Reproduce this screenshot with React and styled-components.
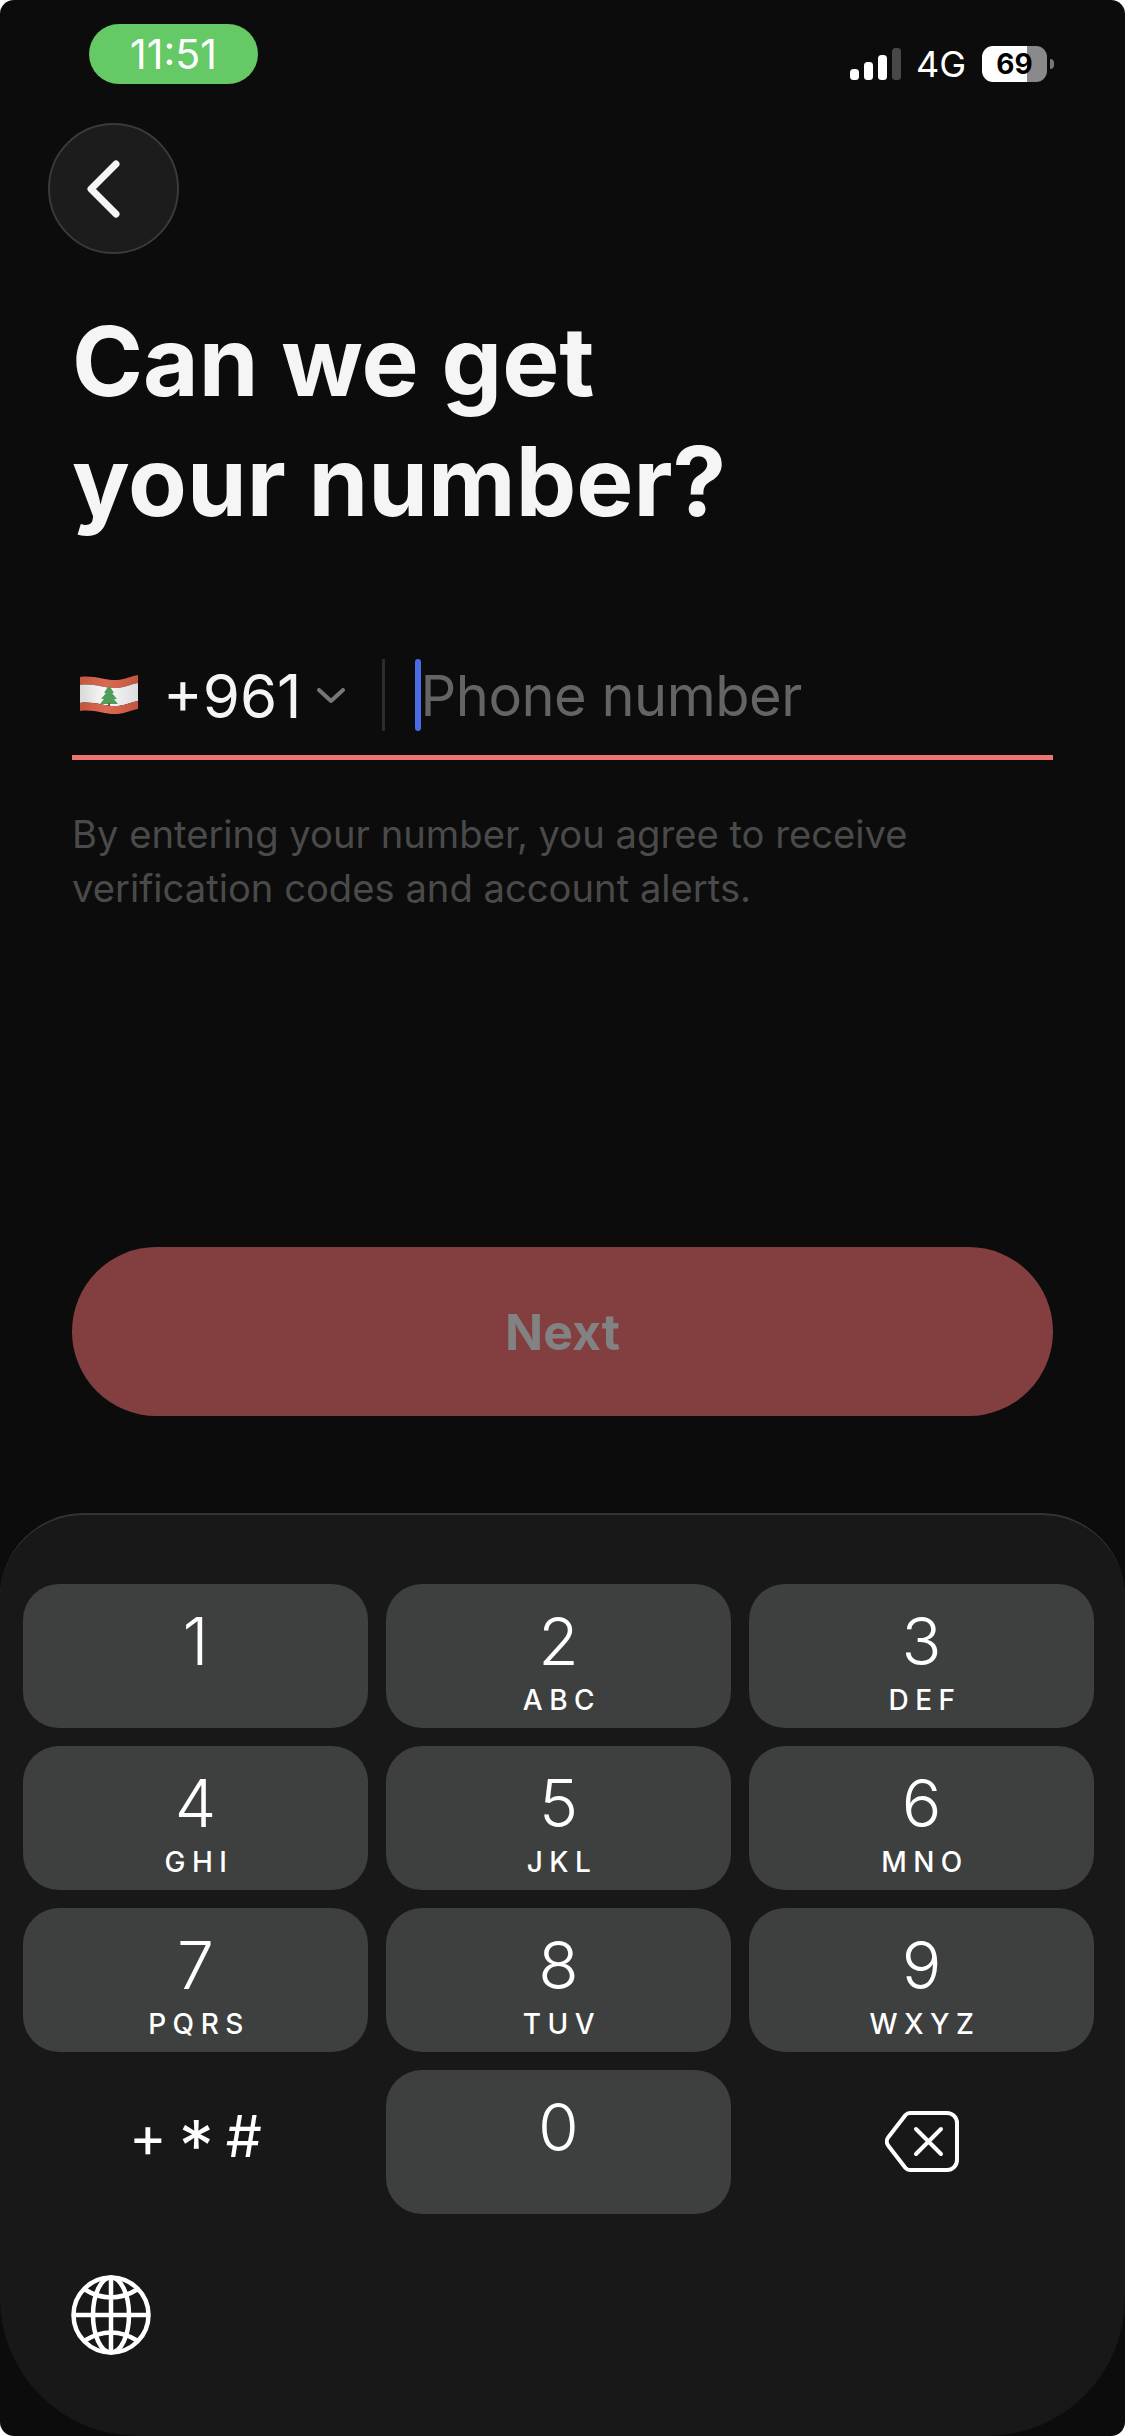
import React from "react";
import styled, { createGlobalStyle } from "styled-components";

const keys = [
  { digit: "1", letters: "" },
  { digit: "2", letters: "ABC" },
  { digit: "3", letters: "DEF" },
  { digit: "4", letters: "GHI" },
  { digit: "5", letters: "JKL" },
  { digit: "6", letters: "MNO" },
  { digit: "7", letters: "PQRS" },
  { digit: "8", letters: "TUV" },
  { digit: "9", letters: "WXYZ" },
];

const wave = (y) =>
  `M0 ${y + 3} C14 ${y + 1} 26 ${y + 7} 38 ${y + 6} C46 ${y + 5} 52 ${y + 2} 58 ${y + 1}`;

const back = (y) =>
  `L58 ${y + 1} C52 ${y + 2} 46 ${y + 5} 38 ${y + 6} C26 ${y + 7} 14 ${y + 1} 0 ${y + 3} Z`;

const band = (top, bottom) => wave(top) + back(bottom);

const Flag = () => (
  <FlagIcon viewBox="0 0 58 42" aria-hidden="true">
    <defs>
      <linearGradient id="flagWhite" x1="0" y1="0" x2="1" y2="0">
        <stop offset="0" stopColor="#d9d9d9" />
        <stop offset="0.45" stopColor="#fafafa" />
        <stop offset="1" stopColor="#dcdcdc" />
      </linearGradient>
      <linearGradient id="flagRed" x1="0" y1="0" x2="1" y2="0">
        <stop offset="0" stopColor="#c4563f" />
        <stop offset="0.45" stopColor="#dc6a52" />
        <stop offset="1" stopColor="#c25540" />
      </linearGradient>
    </defs>
    <path d={band(0, 8)} fill="url(#flagRed)" />
    <path d={band(8, 26)} fill="url(#flagWhite)" />
    <path d={band(26, 34)} fill="url(#flagRed)" />
    <path d="M29 11 L34 19 L32 19 L37 25 L34 25 L38 30 L20 30 L24 25 L21 25 L26 19 L24 19 Z" fill="#4f9e5c" />
    <rect x="28" y="29" width="2" height="3" fill="#7a5a3a" />
  </FlagIcon>
);

const Globe = () => (
  <GlobeIcon viewBox="0 0 80 80" aria-hidden="true">
    <circle cx="40" cy="40" r="37.5" />
    <ellipse cx="40" cy="40" rx="18" ry="37.5" />
    <path d="M40 2.5 V77.5 M2.5 40 H77.5 M13 14 Q40 31 67 14 M13 66 Q40 49 67 66" />
  </GlobeIcon>
);

const App = () => {
  return (
    <Page>
      <GlobalStyle />
      <StatusBar>
        <TimePill>11:51</TimePill>
        <StatusRight>
          <svg width="51" height="32" viewBox="0 0 51 32" aria-hidden="true">
            <rect x="0" y="21" width="9" height="11" rx="3.5" fill="#fff" />
            <rect x="14" y="14" width="9" height="18" rx="3.5" fill="#fff" />
            <rect x="28" y="7" width="9" height="25" rx="3.5" fill="#fff" />
            <rect x="42" y="0" width="9" height="32" rx="3.5" fill="#484848" />
          </svg>
          <Network>4G</Network>
          <Battery>69</Battery>
        </StatusRight>
      </StatusBar>

      <BackButton aria-label="Back">
        <svg width="34" height="58" viewBox="0 0 34 58" aria-hidden="true">
          <path d="M30 4 L5 29 L30 54" />
        </svg>
      </BackButton>

      <Heading>
        Can we get
        <br />
        your number?
      </Heading>

      <PhoneRow>
        <Flag />
        <DialCode>+961</DialCode>
        <svg width="28" height="15" viewBox="0 0 28 15" aria-hidden="true">
          <path d="M2 2 L14 13 L26 2" fill="none" stroke="#777" strokeWidth="4" strokeLinecap="round" strokeLinejoin="round" />
        </svg>
        <Divider />
        <Caret />
        <Placeholder>Phone number</Placeholder>
      </PhoneRow>

      <Legal>
        By entering your number, you agree to receive
        <br />
        verification codes and account alerts.
      </Legal>

      <NextButton>Next</NextButton>

      <Keyboard>
        <KeyGrid>
          {keys.map((k) => (
            <Key key={k.digit}>
              <Digit>{k.digit}</Digit>
              <Letters>{k.letters}</Letters>
            </Key>
          ))}
          <PlainKey $lift={11}>
            <Symbol>+</Symbol>
            <Symbol $star>*</Symbol>
            <Symbol>#</Symbol>
          </PlainKey>
          <Key>
            <Digit>0</Digit>
          </Key>
          <PlainKey $lift={2} aria-label="Delete">
            <svg width="74" height="61" viewBox="0 0 74 61" aria-hidden="true">
              <path
                d="M25 2 H62 a10 10 0 0 1 10 10 V49 a10 10 0 0 1 -10 10 H25 a6 6 0 0 1 -4.5 -2 L3.5 35 a7 7 0 0 1 0 -9 L20.5 4 a6 6 0 0 1 4.5 -2 Z"
                fill="none"
                stroke="#fff"
                strokeWidth="4"
                strokeLinejoin="round"
              />
              <path d="M31 18 L56 43 M56 18 L31 43" fill="none" stroke="#fff" strokeWidth="4" strokeLinecap="round" />
            </svg>
          </PlainKey>
        </KeyGrid>
        <Globe />
      </Keyboard>
    </Page>
  );
};

const GlobalStyle = createGlobalStyle`
  html, body {
    margin: 0;
    padding: 0;
    background: #fff;
  }
  * {
    box-sizing: border-box;
  }
`;

const Page = styled.div`
  width: 1125px;
  height: 2436px;
  display: flex;
  flex-direction: column;
  overflow: hidden;
  border-radius: 14px;
  background: #0c0c0c;
  font-family: Inter, "Liberation Sans", sans-serif;
`;

const StatusBar = styled.div`
  height: 84px;
  padding: 24px 72px 0 89px;
  display: flex;
  justify-content: space-between;
  align-items: flex-start;
`;

const TimePill = styled.div`
  width: 169px;
  height: 60px;
  display: flex;
  align-items: center;
  justify-content: center;
  border-radius: 30px;
  background: #65c966;
  color: #fff;
  font-size: 41px;
  font-weight: 400;
`;

const StatusRight = styled.div`
  margin-top: 21px;
  display: flex;
  align-items: center;
`;

const Network = styled.span`
  margin-left: 15px;
  color: #fff;
  font-size: 36px;
  line-height: 38px;
`;

const Battery = styled.span`
  position: relative;
  width: 65px;
  height: 36px;
  margin: 0 6px 0 16px;
  display: flex;
  align-items: center;
  justify-content: center;
  border-radius: 11px;
  background: linear-gradient(to right, #fff 69%, #8a8a8a 69%);
  color: #000;
  font-size: 28px;
  font-weight: 700;

  &::after {
    content: "";
    position: absolute;
    right: -7px;
    top: 13px;
    width: 4px;
    height: 10px;
    border-radius: 0 4px 4px 0;
    background: #777;
  }
`;

const BackButton = styled.button`
  width: 131px;
  height: 131px;
  margin: 39px 0 0 48px;
  padding: 0 22px 0 0;
  display: flex;
  align-items: center;
  justify-content: center;
  border: 2px solid #3a3a3a;
  border-radius: 50%;
  background: #1c1c1c;

  path {
    fill: none;
    stroke: #f5f5f5;
    stroke-width: 7;
    stroke-linecap: round;
    stroke-linejoin: round;
  }
`;

const Heading = styled.h1`
  margin: 47px 0 0 72px;
  color: #f5f5f5;
  font-size: 96px;
  font-weight: 700;
  line-height: 120px;
`;

const PhoneRow = styled.div`
  margin: 118px 72px 0;
  padding: 0 0 24px 8px;
  display: flex;
  align-items: center;
  border-bottom: 5px solid #ec7571;
`;

const FlagIcon = styled.svg`
  width: 58px;
  height: 42px;
  flex: none;
`;

const DialCode = styled.span`
  margin: 2px 15px 0 25px;
  color: #f5f5f5;
  font-size: 60px;
  line-height: 66px;
`;

const Divider = styled.span`
  width: 3px;
  height: 72px;
  margin: 0 30px 0 37px;
  background: #2c2c2c;
`;

const Caret = styled.span`
  width: 6px;
  height: 72px;
  border-radius: 3px;
  background: #4a6ae8;
`;

const Placeholder = styled.span`
  margin-top: 2px;
  color: #646464;
  font-size: 56px;
  line-height: 66px;
  letter-spacing: -0.5px;
`;

const Legal = styled.p`
  margin: 47px 72px 0;
  color: #4a4a4a;
  font-size: 38.2px;
  line-height: 54px;
`;

const NextButton = styled.button`
  height: 169px;
  margin: 332px 72px 0;
  flex: none;
  border: none;
  border-radius: 85px;
  background: #833f3f;
  color: #828282;
  font-family: inherit;
  font-size: 50px;
  font-weight: 700;
`;

const Keyboard = styled.div`
  margin-top: auto;
  height: 923px;
  padding: 69px 0 0 23px;
  border-top: 2px solid #333;
  border-radius: 84px 84px 138px 138px;
  background: #181818;
`;

const KeyGrid = styled.div`
  display: grid;
  grid-template-columns: repeat(3, 345px);
  grid-auto-rows: 144px;
  gap: 18px;
`;

const Key = styled.div`
  padding-top: 24px;
  display: flex;
  flex-direction: column;
  align-items: center;
  border-radius: 36px;
  background: #3e403f;
  color: #fff;
`;

const Digit = styled.span`
  font-size: 66px;
  font-weight: 350;
  line-height: 66px;
`;

const Letters = styled.span`
  margin-top: 12px;
  padding-left: 7px;
  font-size: 28px;
  font-weight: 500;
  line-height: 28px;
  letter-spacing: 6.5px;
`;

const PlainKey = styled.div`
  padding-bottom: ${(props) => props.$lift}px;
  display: flex;
  align-items: center;
  justify-content: center;
  gap: 12px;
  color: #fff;
`;

const Symbol = styled.span`
  padding-top: ${(props) => (props.$star ? "18px" : "0")};
  font-size: ${(props) => (props.$star ? "70px" : "57px")};
  font-weight: 400;
  line-height: 60px;
`;

const GlobeIcon = styled.svg`
  display: block;
  width: 80px;
  height: 80px;
  margin: 61px 0 0 48px;
  fill: none;
  stroke: #fff;
  stroke-width: 4.5;
`;

export default App;
